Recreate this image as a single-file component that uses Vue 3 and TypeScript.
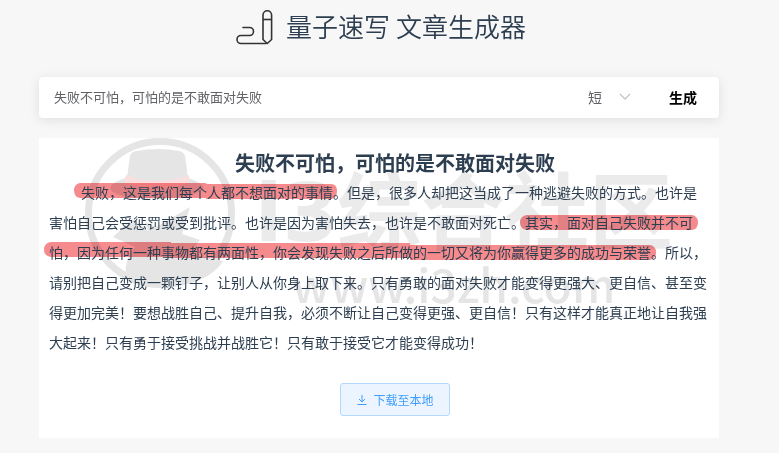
<script setup lang="ts">
import { ref } from 'vue'

const topic = ref('失败不可怕，可怕的是不敢面对失败')
const length = ref('短')
const title = '失败不可怕，可怕的是不敢面对失败'
const article =
  '失败，这是我们每个人都不想面对的事情。但是，很多人却把这当成了一种逃避失败的方式。也许是害怕自己会受惩罚或受到批评。也许是因为害怕失去，也许是不敢面对死亡。其实，面对自己失败并不可怕，因为任何一种事物都有两面性，你会发现失败之后所做的一切又将为你赢得更多的成功与荣誉。所以，请别把自己变成一颗钉子，让别人从你身上取下来。只有勇敢的面对失败才能变得更强大、更自信、甚至变得更加完美！要想战胜自己、提升自我，必须不断让自己变得更强、更自信！只有这样才能真正地让自我强大起来！只有勇于接受挑战并战胜它！只有敢于接受它才能变得成功！'
</script>

<template>
  <main class="page">
    <header class="brand">
      <svg class="brand-icon" viewBox="0 0 38 36" fill="none" stroke="#333" stroke-width="1.6" aria-hidden="true">
        <path d="M7 18.500h6.500a4 4 0 0 1 0 8H5a4 4 0 0 0 0 8h25" stroke-linecap="round" />
        <path d="M27 6a4.300 4.300 0 0 1 8.600 0v24.500l-4.300 4-4.300-4z" stroke-linejoin="round" />
        <path d="M27 10.500h8.600" />
      </svg>
      <h1>量子速写 文章生成器</h1>
    </header>

    <form class="search" @submit.prevent>
      <input v-model="topic" class="topic" type="text" aria-label="主题" />
      <div class="length">
        <select v-model="length" aria-label="长度">
          <option>短</option>
          <option>中</option>
          <option>长</option>
        </select>
        <svg viewBox="0 0 12 8" fill="none" stroke="#c0c4cc" stroke-width="1.3" aria-hidden="true"><path d="M1 1l5 5 5-5" /></svg>
      </div>
      <button class="generate" type="submit">生成</button>
    </form>

    <article class="card">
      <svg class="overlay" viewBox="0 0 680 300" aria-hidden="true">
        <circle cx="121" cy="75" r="71.500" fill="none" stroke="#e5e5e5" stroke-width="7" />
        <g fill="#e5e5e5">
          <path d="M88 40l3-22q1-4 6-5 23-4 43 0 5 1 6 5l3 22c14 5 19 9 13 13-16 10-72 11-88 1-7-5 1-11 14-14z" />
          <path d="M93 81l-19 18 22 10-4 5q-7 12-5 28 34 14 68 2c12-4 23-11 29-21l-34-7 11-14-18-6 8-27-34 20-11-5 3 9z" />
        </g>
        <path d="M87 37q31 12 63 0l1 7q-32 13-66 0z" fill="#f9dfdf" />
        <g class="mark-text">
          <text class="prefix" x="216" y="103" font-size="80">i3</text>
          <text x="298" y="105" font-size="84">综合社区</text>
          <text class="url" x="253" y="165" font-size="46">www.i3zh.com</text>
        </g>
        <g class="marker" fill="#f68b8e">
          <path d="M41 45h126v1h125q6 0 6 7t-6 8H167v-1H41q-6-1-6-7.500T41 45z" />
          <path d="M488 77h165q6 1 6 7.500t-6 7.500H488q-7-1-7-7.500t7-7.500z" />
          <path d="M12 104h120v1h239v2h240q6 1 6 7.500t-6 7.500H371v-2H132v-1H12q-7-1-7-7.500T12 104z" />
        </g>
      </svg>
      <h2>{{ title }}</h2>
      <p>{{ article }}</p>
      <button class="download" type="button">
        <svg viewBox="0 0 12 12" fill="none" stroke="currentColor" aria-hidden="true">
          <path d="M6 1v7M3 5l3 3 3-3M1.500 10.500h9" />
        </svg>
        下载至本地
      </button>
    </article>
  </main>
</template>

<style>
body {
  background: #f7f7f7;
}
</style>

<style scoped>
.page {
  padding: 8px 60px 16px 39px;
  font-family: 'Noto Sans CJK SC', sans-serif;
  color: #2c3e50;
}
.brand {
  display: flex;
  justify-content: center;
  align-items: center;
  gap: 12px;
  height: 38px;
  padding-left: 4px;
}
.brand-icon {
  width: 38px;
  height: 36px;
}
h1 {
  margin: 0 0 2px;
  font-size: 26px;
  line-height: 36px;
  font-weight: 350;
}
.search {
  display: flex;
  align-items: center;
  height: 41px;
  margin-top: 31px;
  background: #fff;
  border-radius: 4px;
  box-shadow: 0 2px 12px rgba(0, 0, 0, 0.1);
}
input,
select,
button {
  border: 0;
  background: none;
  font-family: inherit;
  outline: none;
}
.topic {
  flex: 1;
  min-width: 0;
  height: 38px;
  padding: 0 15px;
  font-size: 13px;
  color: #606266;
}
.search > * {
  margin-bottom: 2px;
}
.length {
  display: flex;
  align-items: center;
  gap: 17px;
}
.length select {
  appearance: none;
  padding: 0;
  font-size: 14px;
  color: #606266;
}
.length svg {
  width: 12px;
  height: 8px;
}
.generate {
  padding: 0 22px 0 38px;
  font-size: 14px;
  font-weight: 700;
  color: #000;
}
.card {
  position: relative;
  display: flex;
  flex-direction: column;
  align-items: center;
  margin-top: 20px;
  padding: 10px 10px 22px;
  background: #fff;
}
.overlay {
  position: absolute;
  inset: 0;
  width: 100%;
  height: 100%;
}
.mark-text {
  fill: #ebebeb;
  font-weight: 700;
}
.prefix {
  font-family: 'DejaVu Sans', sans-serif;
}
.url {
  font-weight: 500;
  fill: #e5e5e5;
}
.marker {
  mix-blend-mode: multiply;
}
h2,
p,
.download {
  position: relative;
}
h2 {
  margin: 0;
  font-size: 20px;
  line-height: 29px;
  text-indent: 32px;
}
p {
  margin: 0;
  font-size: 14px;
  line-height: 30px;
  text-indent: 32px;
}
.download {
  display: flex;
  align-items: center;
  gap: 5px;
  height: 33px;
  margin-top: 26px;
  margin-left: 32px;
  padding: 0 15px;
  border: 1px solid #b3d8ff;
  border-radius: 3px;
  background: #ecf5ff;
  font-size: 12px;
  color: #409eff;
}
.download svg {
  width: 12px;
  height: 12px;
}
</style>
